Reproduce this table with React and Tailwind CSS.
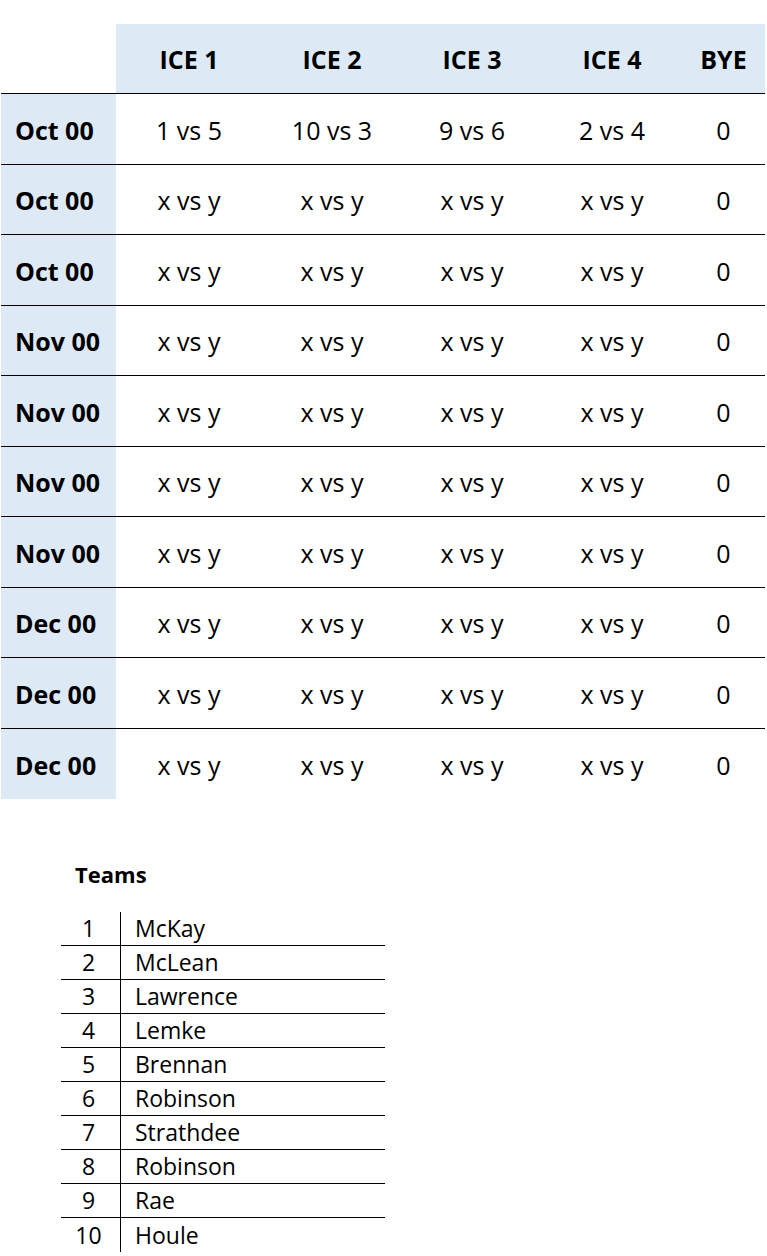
import React from 'react';

const dates = ['Oct 00', 'Oct 00', 'Oct 00', 'Nov 00', 'Nov 00', 'Nov 00', 'Nov 00', 'Dec 00', 'Dec 00', 'Dec 00'];
const teams = ['McKay', 'McLean', 'Lawrence', 'Lemke', 'Brennan', 'Robinson', 'Strathdee', 'Robinson', 'Rae', 'Houle'];
const cols = 'grid grid-cols-[115px_146px_140px_140px_140px_83px]';

function App() {
    return (
        <div className="min-h-screen bg-white text-black" style={{ fontFamily: '"Open Sans", Lato, sans-serif' }}>
            <div className="pt-[24px] pl-[1px] w-[765px]">
                {/* header */}
                <div className={`${cols} h-[70px] border-b border-black`}>
                    <div className="bg-white"></div>
                    {['ICE 1', 'ICE 2', 'ICE 3', 'ICE 4', 'BYE'].map((h) => (
                        <div key={h} className="bg-[#dde9f5] flex items-center justify-center font-bold text-[25px] leading-none pt-[2px]">{h}</div>
                    ))}
                </div>

                {/* schedule rows */}
                {dates.map((d, i) => (
                    <div key={i} className={`${cols} h-[70.5px] ${i < dates.length - 1 ? 'border-b border-black' : ''}`}>
                        <div className="bg-[#dde9f5] flex items-center pl-[14px] pt-[3px] font-bold text-[25px] leading-none">{d}</div>
                        {(i === 0 ? ['1 vs 5', '10 vs 3', '9 vs 6', '2 vs 4'] : ['x vs y', 'x vs y', 'x vs y', 'x vs y']).map((m, j) => (
                            <div key={j} className="flex items-center justify-center pt-[3px] text-[25px] leading-none">{m}</div>
                        ))}
                        <div className="flex items-center justify-center pt-[3px] text-[25px] leading-none">0</div>
                    </div>
                ))}
            </div>

            {/* teams list */}
            <div className="pl-[61px] pt-[64px]">
                <div className="pl-[14px] font-bold text-[22px] leading-none">Teams</div>
                <div className="mt-[27px] w-[324px]">
                    {teams.map((t, i) => (
                        <div key={i} className={`grid grid-cols-[60px_264px] h-[34px] ${i < teams.length - 1 ? 'border-b border-black' : ''}`}>
                            <div className="flex items-center justify-center pr-[4px] text-[23px] leading-none border-r border-black">{i + 1}</div>
                            <div className="flex items-center pl-[14px] text-[23px] leading-none">{t}</div>
                        </div>
                    ))}
                </div>
            </div>
        </div>
    );
}

export default App;
